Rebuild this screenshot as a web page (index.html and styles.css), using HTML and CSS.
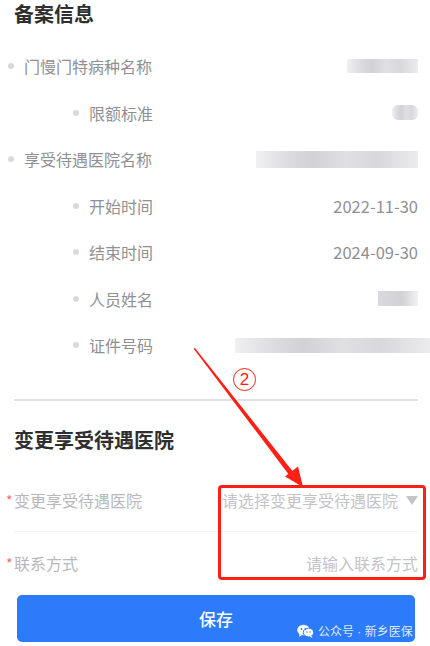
FILE: index.html
```html
<!DOCTYPE html>
<html>
<head>
<meta charset="UTF-8">
<link rel="stylesheet" href="styles.css">
</head>
<body>
<div class="page">

    <section class="record">
        <h2 class="title">备案信息</h2>
        <ul class="info">
            <li class="item"><span class="label">门慢门特病种名称</span><span class="mask mask-disease"></span></li>
            <li class="item sub"><span class="label">限额标准</span><span class="mask mask-quota"></span></li>
            <li class="item"><span class="label">享受待遇医院名称</span><span class="mask mask-hospital"></span></li>
            <li class="item sub"><span class="label">开始时间</span><span class="value">2022-11-30</span></li>
            <li class="item sub"><span class="label">结束时间</span><span class="value">2024-09-30</span></li>
            <li class="item sub"><span class="label">人员姓名</span><span class="mask mask-name"></span></li>
            <li class="item sub"><span class="label">证件号码</span><span class="mask mask-id"></span></li>
        </ul>
    </section>

    <hr class="divider">

    <section class="change">
        <h2 class="title">变更享受待遇医院</h2>
        <div class="field">
            <span class="star">*</span><span class="field-label">变更享受待遇医院</span>
            <span class="placeholder">请选择变更享受待遇医院</span><span class="caret"></span>
        </div>
        <div class="field last">
            <span class="star">*</span><span class="field-label">联系方式</span>
            <span class="placeholder">请输入联系方式</span>
        </div>
    </section>

    <div class="save">
        保存
        <span class="mark">
            <svg width="17" height="14" viewBox="0 0 17 14">
                <ellipse cx="6.5" cy="6" rx="6.3" ry="5.3" fill="#fff"/>
                <path d="M2.5 10 L2 13 L5 11 Z" fill="#fff"/>
                <ellipse cx="11.5" cy="8.5" rx="5.2" ry="4.4" fill="#fff" stroke="#2b7bfa" stroke-width="1"/>
                <path d="M14.5 12 L15.5 14 L12.5 12.6 Z" fill="#fff"/>
                <circle cx="4.4" cy="5" r="0.9" fill="#2b7bfa"/>
                <circle cx="8.4" cy="5" r="0.9" fill="#2b7bfa"/>
                <circle cx="9.9" cy="8" r="0.7" fill="#2b7bfa"/>
                <circle cx="13.1" cy="8" r="0.7" fill="#2b7bfa"/>
            </svg>
            <span>公众号<span class="sep"> · </span>新乡医保</span>
        </span>
    </div>

    <!-- red markup drawn over the form -->
    <svg class="arrow" width="430" height="646" viewBox="0 0 430 646">
        <polygon points="193.5,348.5 195,348 293.6,472.5 289.5,475.5" fill="#ff1f14"/>
        <polygon points="303,487 285,476.5 298,466.5" fill="#ff1f14"/>
    </svg>
    <span class="step">2</span>
    <div class="frame"></div>

</div>
</body>
</html>
```

FILE: styles.css
```css
body
{
    margin: 0;
    padding: 0;
    background: #fff;
    font-family: "Noto Sans CJK SC", "Noto Sans", sans-serif;
}

.page
{
    position: relative;
    width: 430px;
    height: 646px;
    overflow: hidden;
}

.title
{
    margin: 0;
    padding-left: 14px;
    height: 28px;
    line-height: 28px;
    font-size: 20px;
    font-weight: bold;
    color: #2f2f2f;
}

.info
{
    list-style: none;
    margin: 0;
    padding: 15px 0 0 0;
}

.item
{
    display: flex;
    align-items: center;
    justify-content: space-between;
    height: 46.5px;
    padding: 0 12px 0 8px;
    font-size: 16px;
    color: #8f8f94;
}

.item.sub
{
    padding-left: 73px;
}

.label
{
    display: flex;
    align-items: center;
}

.label::before
{
    content: "";
    width: 6px;
    height: 6px;
    border-radius: 50%;
    background: #d9d9de;
    margin-right: 10px;
}

.value
{
    font-size: 16.5px;
    color: #8f8f94;
}

/* blurred-out values */
.mask
{
    display: block;
    height: 14px;
    background: linear-gradient(90deg, #f0f0f2 0%, #dcdce0 20%, #d2d2d6 35%, #e0e0e3 55%, #d8d8dc 75%, #ececee 100%);
    filter: blur(0.6px);
}

.mask-disease { width: 71px; }
.mask-quota { width: 26px; height: 15px; border-radius: 6px; }
.mask-hospital { width: 162px; height: 17px; }
.mask-name { width: 40px; height: 15px; background: linear-gradient(90deg, #dadade 0%, #d2d2d6 60%, #f2f2f3 100%); }
.mask-id { width: 195px; height: 15px; margin-right: -12px; }

.divider
{
    margin: 30.5px 12px 0 14px;
    border: 0;
    height: 2px;
    background: #e2e2e4;
}

.change
{
    padding-top: 25px;
}

.change .title
{
    margin-bottom: 15px;
}

.field
{
    display: flex;
    align-items: center;
    height: 62px;
    margin: 0 12px 0 14px;
    border-bottom: 1px solid #f1f1f3;
    font-size: 16px;
}

.field.last
{
    border-bottom: 0;
}

.star
{
    width: 8px;
    margin-left: -8px;
    color: #f56c6c;
    font-size: 14px;
}

.field-label
{
    color: #b8b8bc;
}

.placeholder
{
    margin-left: auto;
    color: #c3c3c8;
}

.caret
{
    width: 0;
    height: 0;
    margin-left: 8px;
    border-left: 6px solid transparent;
    border-right: 6px solid transparent;
    border-top: 9px solid #c3c3c8;
}

.save
{
    position: relative;
    display: flex;
    align-items: center;
    justify-content: center;
    height: 47px;
    margin: 1px 15px 0 17px;
    border-radius: 5px;
    background: #2b7bfa;
    color: #fff;
    font-size: 17px;
    font-weight: 500;
    overflow: hidden;
}

/* account watermark over the button */
.mark
{
    position: absolute;
    left: 280px;
    top: 27px;
    display: flex;
    align-items: center;
    gap: 4px;
    white-space: nowrap;
    font-size: 12px;
    font-weight: normal;
    color: rgba(255, 255, 255, 0.85);
}

.sep
{
    font-family: "Liberation Sans", sans-serif;
}

.arrow
{
    position: absolute;
    left: 0;
    top: 0;
}

.step
{
    position: absolute;
    left: 233px;
    top: 368px;
    width: 21px;
    height: 21px;
    border: 1.5px solid #ff1f14;
    border-radius: 50%;
    color: #ff1f14;
    font-family: "Liberation Sans", sans-serif;
    font-size: 17px;
    line-height: 21px;
    text-align: center;
}

.frame
{
    position: absolute;
    left: 218px;
    top: 485px;
    width: 202px;
    height: 89px;
    border: 3px solid #ff1f14;
    border-radius: 4px;
}
```
